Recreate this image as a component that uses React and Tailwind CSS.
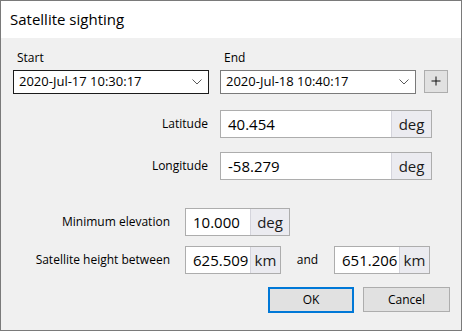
import React from "react";

const Chevron = () => (
  <svg width="10" height="6" viewBox="0 0 10 6" className="shrink-0">
    <path d="M0.5 0.5 L5 5 L9.5 0.5" fill="none" stroke="#5a5a5a" strokeWidth="1" />
  </svg>
);

const Combo = ({ value, focused }) => (
  <div
    className={`flex items-center justify-between w-[196px] h-[24px] bg-white border pl-[5px] pr-[6px] ${
      focused ? "border-[#1b1b1b]" : "border-[#7a7a7a]"
    }`}
  >
    <span className="text-[13px] text-black">{value}</span>
    <Chevron />
  </div>
);

const UnitInput = ({ value, unit, width, unitWidth }) => (
  <div className={`flex h-[28px] border border-[#adadad] bg-white ${width}`}>
    <div className="flex-1 flex items-center pl-[7px] text-[15px] text-black">{value}</div>
    <div
      className={`flex items-center justify-center bg-[#ebebf0] border-l border-[#d4d4dc] text-[15px] text-[#1a1a1a] ${unitWidth}`}
    >
      {unit}
    </div>
  </div>
);

export default function App() {
  return (
    <div
      className="w-[462px] h-[331px] border border-[#7a7a7a] bg-[#f0f0f0] flex flex-col"
      style={{ fontFamily: '"Open Sans", "Noto Sans", sans-serif' }}
    >
      {/* Title */}
      <div className="h-[37px] bg-white flex items-center pl-[9px] text-[15px] text-black shrink-0">
        Satellite sighting
      </div>

      {/* Start / End */}
      <div className="flex mt-[11px] text-[12px] text-black">
        <div className="ml-[16px] w-[207px]">Start</div>
        <div>End</div>
      </div>
      <div className="flex items-center mt-[3px]">
        <div className="ml-[12px]">
          <Combo value="2020-Jul-17 10:30:17" focused />
        </div>
        <div className="ml-[11px]">
          <Combo value="2020-Jul-18 10:40:17" />
        </div>
        <button className="ml-[8px] w-[24px] h-[23px] -mt-[2px] bg-[#e1e1e1] border border-[#adadad] flex items-center justify-center">
          <svg width="10" height="10" viewBox="0 0 10 10">
            <path d="M5 0.5 V9.5 M0.5 5 H9.5" stroke="#111" strokeWidth="1" />
          </svg>
        </button>
      </div>

      {/* Lat / Lon */}
      <div className="flex items-center mt-[16px]">
        <div className="w-[207px] text-right text-[12px] text-black">Latitude</div>
        <div className="ml-[12px]">
          <UnitInput value="40.454" unit="deg" width="w-[212px]" unitWidth="w-[40px]" />
        </div>
      </div>
      <div className="flex items-center mt-[14px]">
        <div className="w-[207px] text-right text-[12px] text-black">Longitude</div>
        <div className="ml-[12px]">
          <UnitInput value="-58.279" unit="deg" width="w-[212px]" unitWidth="w-[40px]" />
        </div>
      </div>

      {/* Elevation / height */}
      <div className="flex items-center mt-[28px]">
        <div className="w-[169px] text-right text-[12px] text-black">Minimum elevation</div>
        <div className="ml-[15px]">
          <UnitInput value="10.000" unit="deg" width="w-[105px]" unitWidth="w-[39px]" />
        </div>
      </div>
      <div className="flex items-center mt-[10px]">
        <div className="w-[169px] text-right text-[12px] text-black">Satellite height between</div>
        <div className="ml-[15px]">
          <UnitInput value="625.509" unit="km" width="w-[96px]" unitWidth="w-[30px]" />
        </div>
        <div className="w-[53px] text-center text-[12px] text-black">and</div>
        <UnitInput value="651.206" unit="km" width="w-[96px]" unitWidth="w-[30px]" />
      </div>

      {/* Buttons */}
      <div className="flex justify-end mt-[13px] pr-[11px] gap-[9px]">
        <button className="w-[86px] h-[26px] bg-[#e1e1e1] border-2 border-[#0078d7] text-[12px] text-black">
          OK
        </button>
        <button className="w-[87px] h-[25px] bg-[#e1e1e1] border border-[#adadad] text-[12px] text-black">
          Cancel
        </button>
      </div>
    </div>
  );
}
